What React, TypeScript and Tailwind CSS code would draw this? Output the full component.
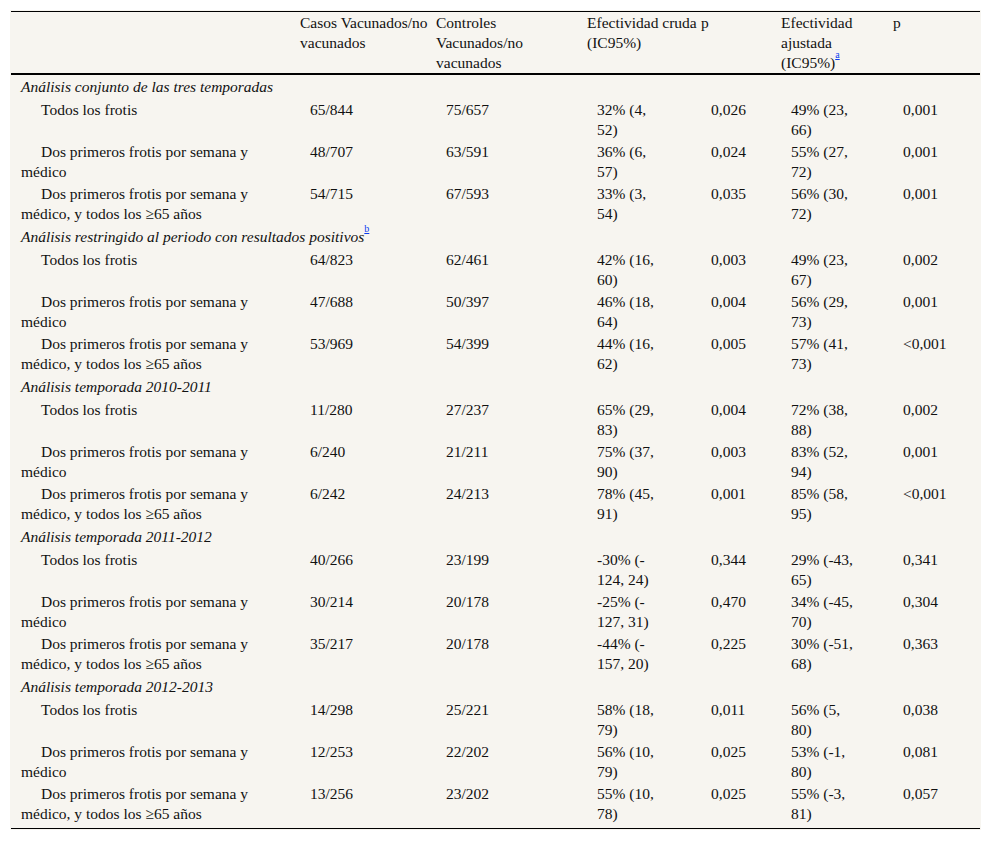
import { Fragment } from "react";

type Row = [string, string, string, string, string, string, string];

type Section = {
  title: string;
  note?: string;
  rows: Row[];
};

const TODOS = "Todos los frotis";
const DOS = "Dos primeros frotis por semana y médico";
const DOS65 = "Dos primeros frotis por semana y médico, y todos los ≥65 años";

// "|" marks an extra break opportunity (after an opening "(-")
const sections: Section[] = [
  {
    title: "Análisis conjunto de las tres temporadas",
    rows: [
      [TODOS, "65/844", "75/657", "32% (4, 52)", "0,026", "49% (23, 66)", "0,001"],
      [DOS, "48/707", "63/591", "36% (6, 57)", "0,024", "55% (27, 72)", "0,001"],
      [DOS65, "54/715", "67/593", "33% (3, 54)", "0,035", "56% (30, 72)", "0,001"],
    ],
  },
  {
    title: "Análisis restringido al periodo con resultados positivos",
    note: "b",
    rows: [
      [TODOS, "64/823", "62/461", "42% (16, 60)", "0,003", "49% (23, 67)", "0,002"],
      [DOS, "47/688", "50/397", "46% (18, 64)", "0,004", "56% (29, 73)", "0,001"],
      [DOS65, "53/969", "54/399", "44% (16, 62)", "0,005", "57% (41, 73)", "<0,001"],
    ],
  },
  {
    title: "Análisis temporada 2010-2011",
    rows: [
      [TODOS, "11/280", "27/237", "65% (29, 83)", "0,004", "72% (38, 88)", "0,002"],
      [DOS, "6/240", "21/211", "75% (37, 90)", "0,003", "83% (52, 94)", "0,001"],
      [DOS65, "6/242", "24/213", "78% (45, 91)", "0,001", "85% (58, 95)", "<0,001"],
    ],
  },
  {
    title: "Análisis temporada 2011-2012",
    rows: [
      [TODOS, "40/266", "23/199", "-30% (-|124, 24)", "0,344", "29% (-43, 65)", "0,341"],
      [DOS, "30/214", "20/178", "-25% (-|127, 31)", "0,470", "34% (-45, 70)", "0,304"],
      [DOS65, "35/217", "20/178", "-44% (-|157, 20)", "0,225", "30% (-51, 68)", "0,363"],
    ],
  },
  {
    title: "Análisis temporada 2012-2013",
    rows: [
      [TODOS, "14/298", "25/221", "58% (18, 79)", "0,011", "56% (5, 80)", "0,038"],
      [DOS, "12/253", "22/202", "56% (10, 79)", "0,025", "53% (-1, 80)", "0,081"],
      [DOS65, "13/256", "23/202", "55% (10, 78)", "0,025", "55% (-3, 81)", "0,057"],
    ],
  },
];

function Note({ children }: { children: string }) {
  return (
    <sup className="not-italic text-[10px] leading-none text-[#0a3cf0] underline align-[5px]">{children}</sup>
  );
}

function Interval({ value }: { value: string }) {
  const parts = value.split("|");
  return (
    <div className="w-[66px]">
      {parts.map((p, i) => (
        <Fragment key={i}>
          {i > 0 && <wbr />}
          {p}
        </Fragment>
      ))}
    </div>
  );
}

export default function App() {
  return (
    <div className="min-h-[841px] bg-white pt-[10px] pl-[10px] font-['Liberation_Serif','Times_New_Roman',serif] text-[15.5px] leading-[20px] text-[#111]">
      <div className="w-[971px] bg-[#f7f5f0] p-[1px]">
        <table className="w-[969px] table-fixed border-collapse border-y border-black">
          <colgroup>
            <col className="w-[289px]" />
            <col className="w-[136px]" />
            <col className="w-[151px]" />
            <col className="w-[114px]" />
            <col className="w-[80px]" />
            <col className="w-[112px]" />
            <col className="w-[87px]" />
          </colgroup>
          <thead>
            <tr className="border-b-2 border-black align-top">
              <th className="pt-[1px]" />
              <th className="pt-[1px] text-left font-normal">
                Casos Vacunados/no
                <br />
                vacunados
              </th>
              <th className="pt-[1px] text-left font-normal">
                Controles
                <br />
                Vacunados/no
                <br />
                vacunados
              </th>
              <th className="pt-[1px] text-left font-normal">
                Efectividad cruda
                <br />
                (IC95%)
              </th>
              <th className="pt-[1px] text-left font-normal">p</th>
              <th className="pt-[1px] text-left font-normal">
                Efectividad
                <br />
                ajustada
                <br />
                (IC95%)<Note>a</Note>
              </th>
              <th className="pt-[1px] text-left font-normal">p</th>
            </tr>
          </thead>
          <tbody>
            {sections.map((section) => (
              <SectionRows key={section.title} section={section} />
            ))}
            <tr>
              <td colSpan={7} className="h-[3px] p-0" />
            </tr>
          </tbody>
        </table>
      </div>
    </div>
  );
}

function SectionRows({ section }: { section: Section }) {
  return (
    <>
      <tr>
        <td colSpan={7} className="py-[2px] pl-[10px] italic">
          {section.title}
          {section.note && <Note>{section.note}</Note>}
        </td>
      </tr>
      {section.rows.map((row, i) => (
        <tr key={i} className="align-top">
          <td className="py-[1px] pl-[10px]">
            <div className="w-[250px] indent-[20px]">{row[0]}</div>
          </td>
          <td className="py-[1px] pl-[10px]">{row[1]}</td>
          <td className="py-[1px] pl-[10px]">{row[2]}</td>
          <td className="py-[1px] pl-[10px]">
            <Interval value={row[3]} />
          </td>
          <td className="py-[1px] pl-[10px]">{row[4]}</td>
          <td className="py-[1px] pl-[10px]">
            <Interval value={row[5]} />
          </td>
          <td className="py-[1px] pl-[10px]">{row[6]}</td>
        </tr>
      ))}
    </>
  );
}
